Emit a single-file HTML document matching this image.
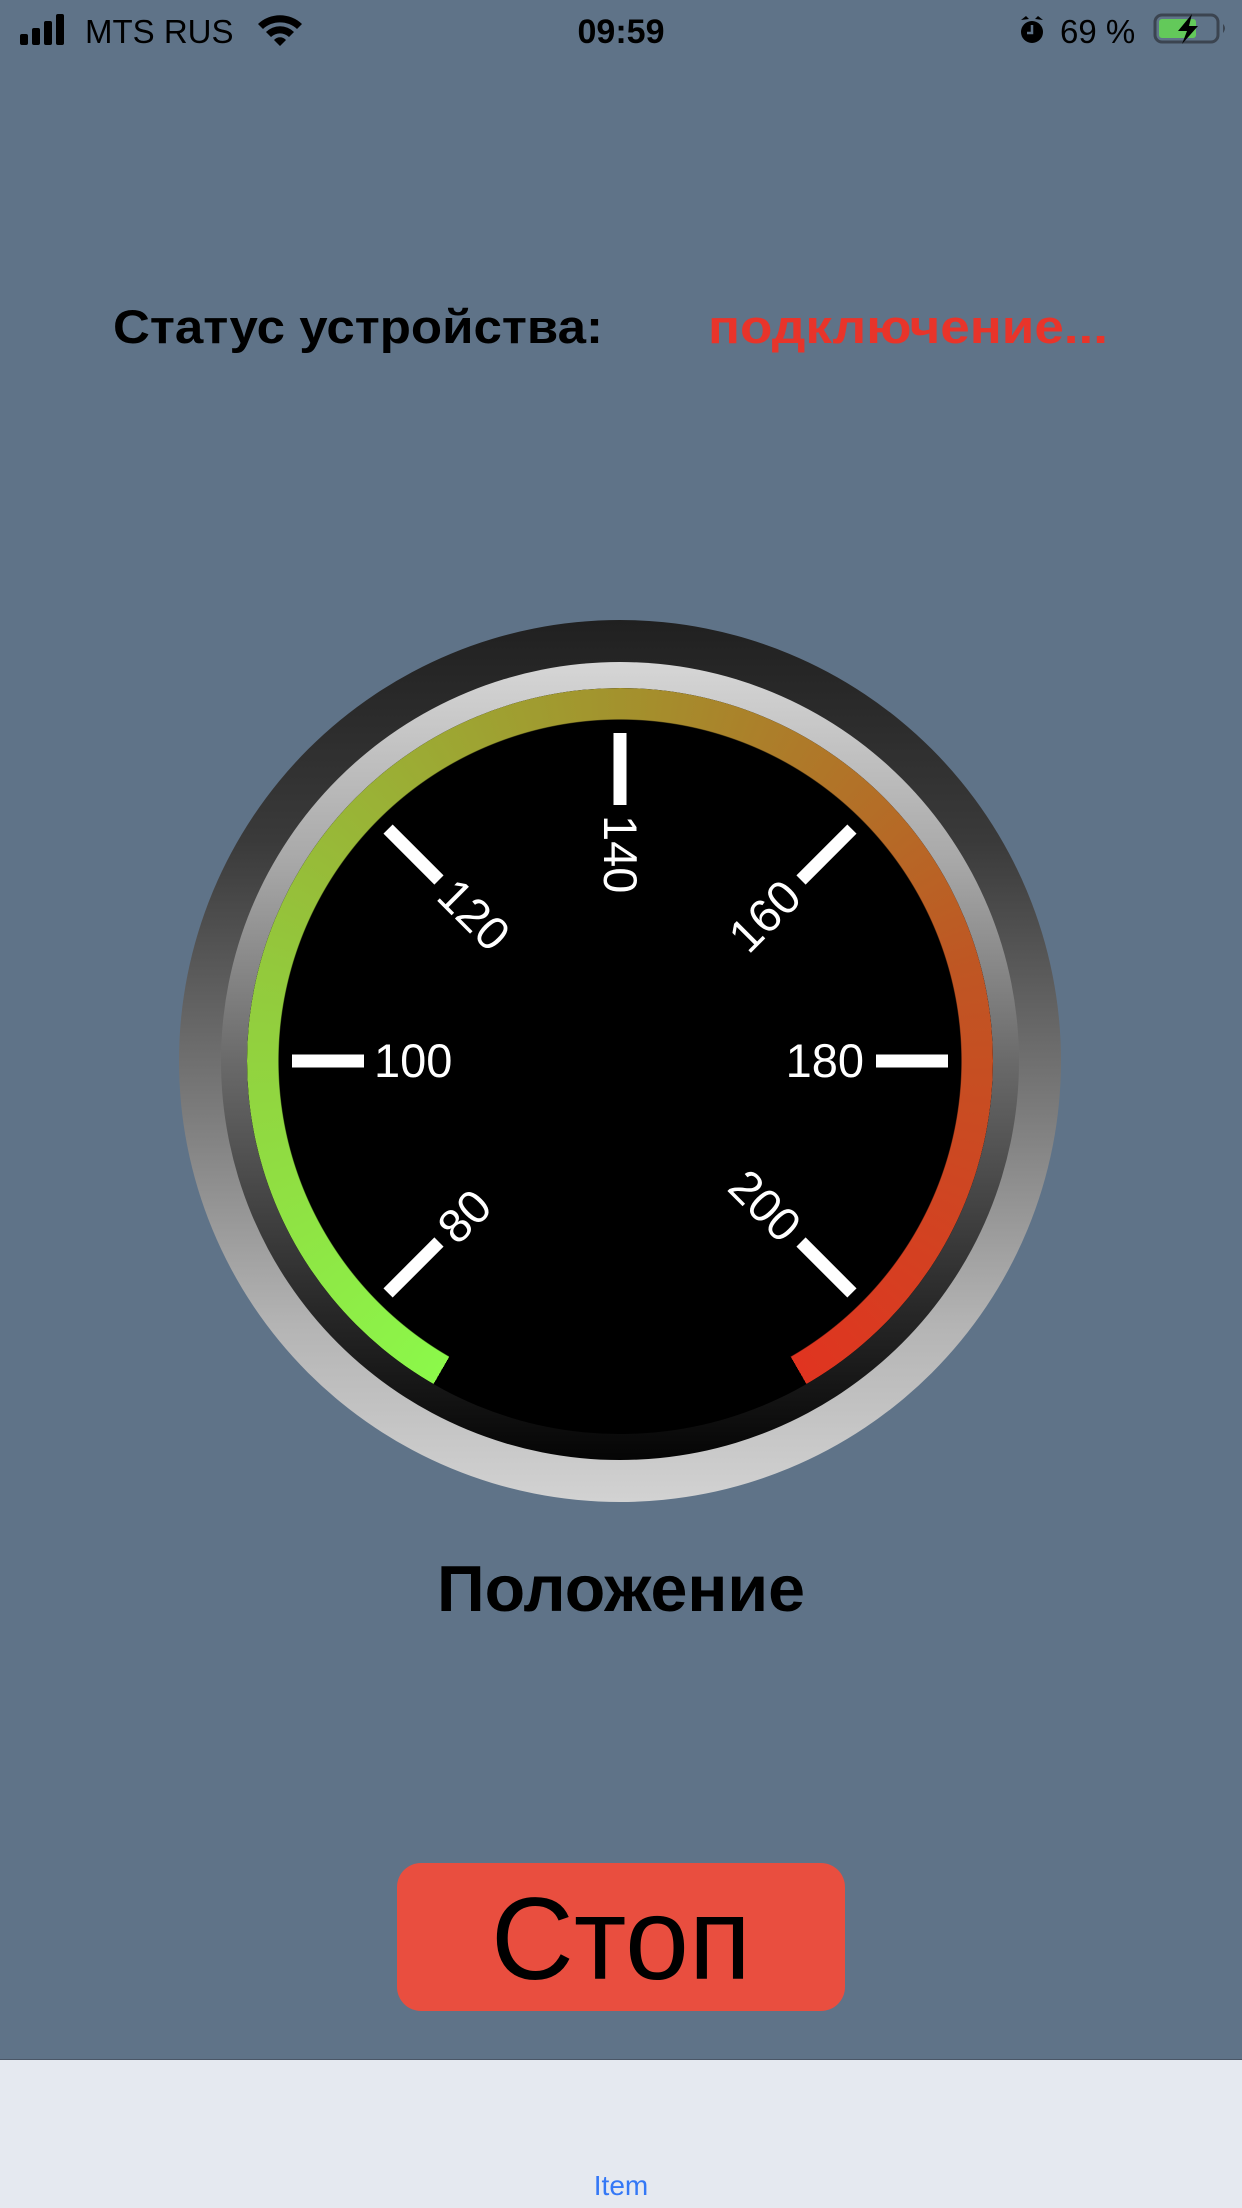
<!DOCTYPE html>
<html><head><meta charset="utf-8"><style>
html,body{margin:0;padding:0;}
body{width:1242px;height:2208px;position:relative;overflow:hidden;background:#5F7388;font-family:"Liberation Sans","Noto Sans CJK SC",sans-serif;}
.abs{position:absolute;}
.c{border-radius:50%;}
</style></head><body>
<div class="abs c" style="left:179px;top:620px;width:882px;height:882px;background:linear-gradient(#202020,#3a3a3a 25%,#7a7a7a 55%,#b4b4b4 80%,#d2d2d2);"></div>
<div class="abs c" style="left:221px;top:662px;width:798px;height:798px;background:linear-gradient(#d6d6d6,#a8a8a8 25%,#6a6a6a 50%,#2a2a2a 80%,#050505);"></div>
<div class="abs c" style="left:247px;top:688px;width:746px;height:746px;background:#000;"></div>
<div class="abs c" style="left:247px;top:688px;width:746px;height:746px;background:conic-gradient(from 210deg,#8CF84A 0deg,#93C93C 75deg,#A3922D 150deg,#BF5623 225deg,#E03420 300deg,transparent 300deg);-webkit-mask:radial-gradient(circle closest-side,transparent 341px,#000 342px);mask:radial-gradient(circle closest-side,transparent 341px,#000 342px);"></div>
<svg class="abs" style="left:0;top:0" width="1242" height="2208" viewBox="0 0 1242 2208">
<g fill="#fff" font-family="Liberation Sans, sans-serif" font-size="47">
<g transform="rotate(-45 620 1061)"><rect x="292" y="1054.5" width="72" height="13"/><text x="374" y="1077">80</text></g>
<g transform="rotate(0 620 1061)"><rect x="292" y="1054.5" width="72" height="13"/><text x="374" y="1077">100</text></g>
<g transform="rotate(45 620 1061)"><rect x="292" y="1054.5" width="72" height="13"/><text x="374" y="1077">120</text></g>
<g transform="rotate(90 620 1061)"><rect x="292" y="1054.5" width="72" height="13"/><text x="374" y="1077">140</text></g>
<g transform="rotate(-45 620 1061)"><rect x="876" y="1054.5" width="72" height="13"/><text x="864" y="1077" text-anchor="end">160</text></g>
<g transform="rotate(0 620 1061)"><rect x="876" y="1054.5" width="72" height="13"/><text x="864" y="1077" text-anchor="end">180</text></g>
<g transform="rotate(45 620 1061)"><rect x="876" y="1054.5" width="72" height="13"/><text x="864" y="1077" text-anchor="end">200</text></g>
</g>
<g fill="#000">
<rect x="20" y="34" width="8" height="11" rx="2"/><rect x="32" y="28" width="8" height="17" rx="2"/><rect x="44" y="21" width="8" height="24" rx="2"/><rect x="56" y="14" width="8" height="31" rx="2"/>
<text x="85" y="43" font-size="33" font-family="Liberation Sans, sans-serif">MTS RUS</text>
<path d="M258 24 A32 32 0 0 1 302 24 L297 29 A25 25 0 0 0 263 29 Z M266 32 A20 20 0 0 1 294 32 L289 37 A13 13 0 0 0 271 37 Z M274 40 A8 8 0 0 1 286 40 L280 46 Z"/>
<text x="621" y="43" font-size="34" font-weight="bold" text-anchor="middle" font-family="Liberation Sans, sans-serif">09:59</text>
<circle cx="1032" cy="32" r="11"/><path d="M1021 20 l5 -4 l3 3z M1043 20 l-5 -4 l-3 3z"/><path d="M1032 25 v8 h-5" stroke="#5F7388" stroke-width="2.5" fill="none"/>
<text x="1060" y="43" font-size="33" font-family="Liberation Sans, sans-serif">69 %</text>
</g>
<rect x="1155" y="15" width="63" height="27" rx="7" fill="none" stroke="#3b4450" stroke-width="3"/>
<rect x="1159" y="19" width="37" height="19" rx="3" fill="#63C95A"/>
<path d="M1223 24 q4 4 0 9 z" fill="#3b4450"/>
<path d="M1192 14 L1178 31 L1187 31 L1182 44 L1198 26 L1189 26 Z" fill="#000"/>
<text x="113" y="343" font-size="47" font-weight="bold" textLength="490" lengthAdjust="spacingAndGlyphs" font-family="Liberation Sans, sans-serif">Статус устройства:</text>
<text x="708" y="343" font-size="47" font-weight="bold" fill="#E8342A" textLength="400" lengthAdjust="spacingAndGlyphs" font-family="Liberation Sans, sans-serif">подключение...</text>
<text x="621" y="1611" font-size="65" font-weight="bold" text-anchor="middle" textLength="368" lengthAdjust="spacingAndGlyphs" font-family="Liberation Sans, sans-serif">Положение</text>
<rect x="397" y="1863" width="448" height="148" rx="24" fill="#E94E3F"/>
<text x="621" y="1979" font-size="117" text-anchor="middle" textLength="260" lengthAdjust="spacingAndGlyphs" font-family="Liberation Sans, sans-serif">Стоп</text>
<rect x="0" y="2060" width="1242" height="148" fill="#E5E9F0"/>
<rect x="0" y="2059" width="1242" height="1" fill="#4a5666"/>
<text x="621" y="2195" font-size="28" fill="#3478F6" text-anchor="middle" font-family="Liberation Sans, sans-serif">Item</text>
</svg>
</body></html>
